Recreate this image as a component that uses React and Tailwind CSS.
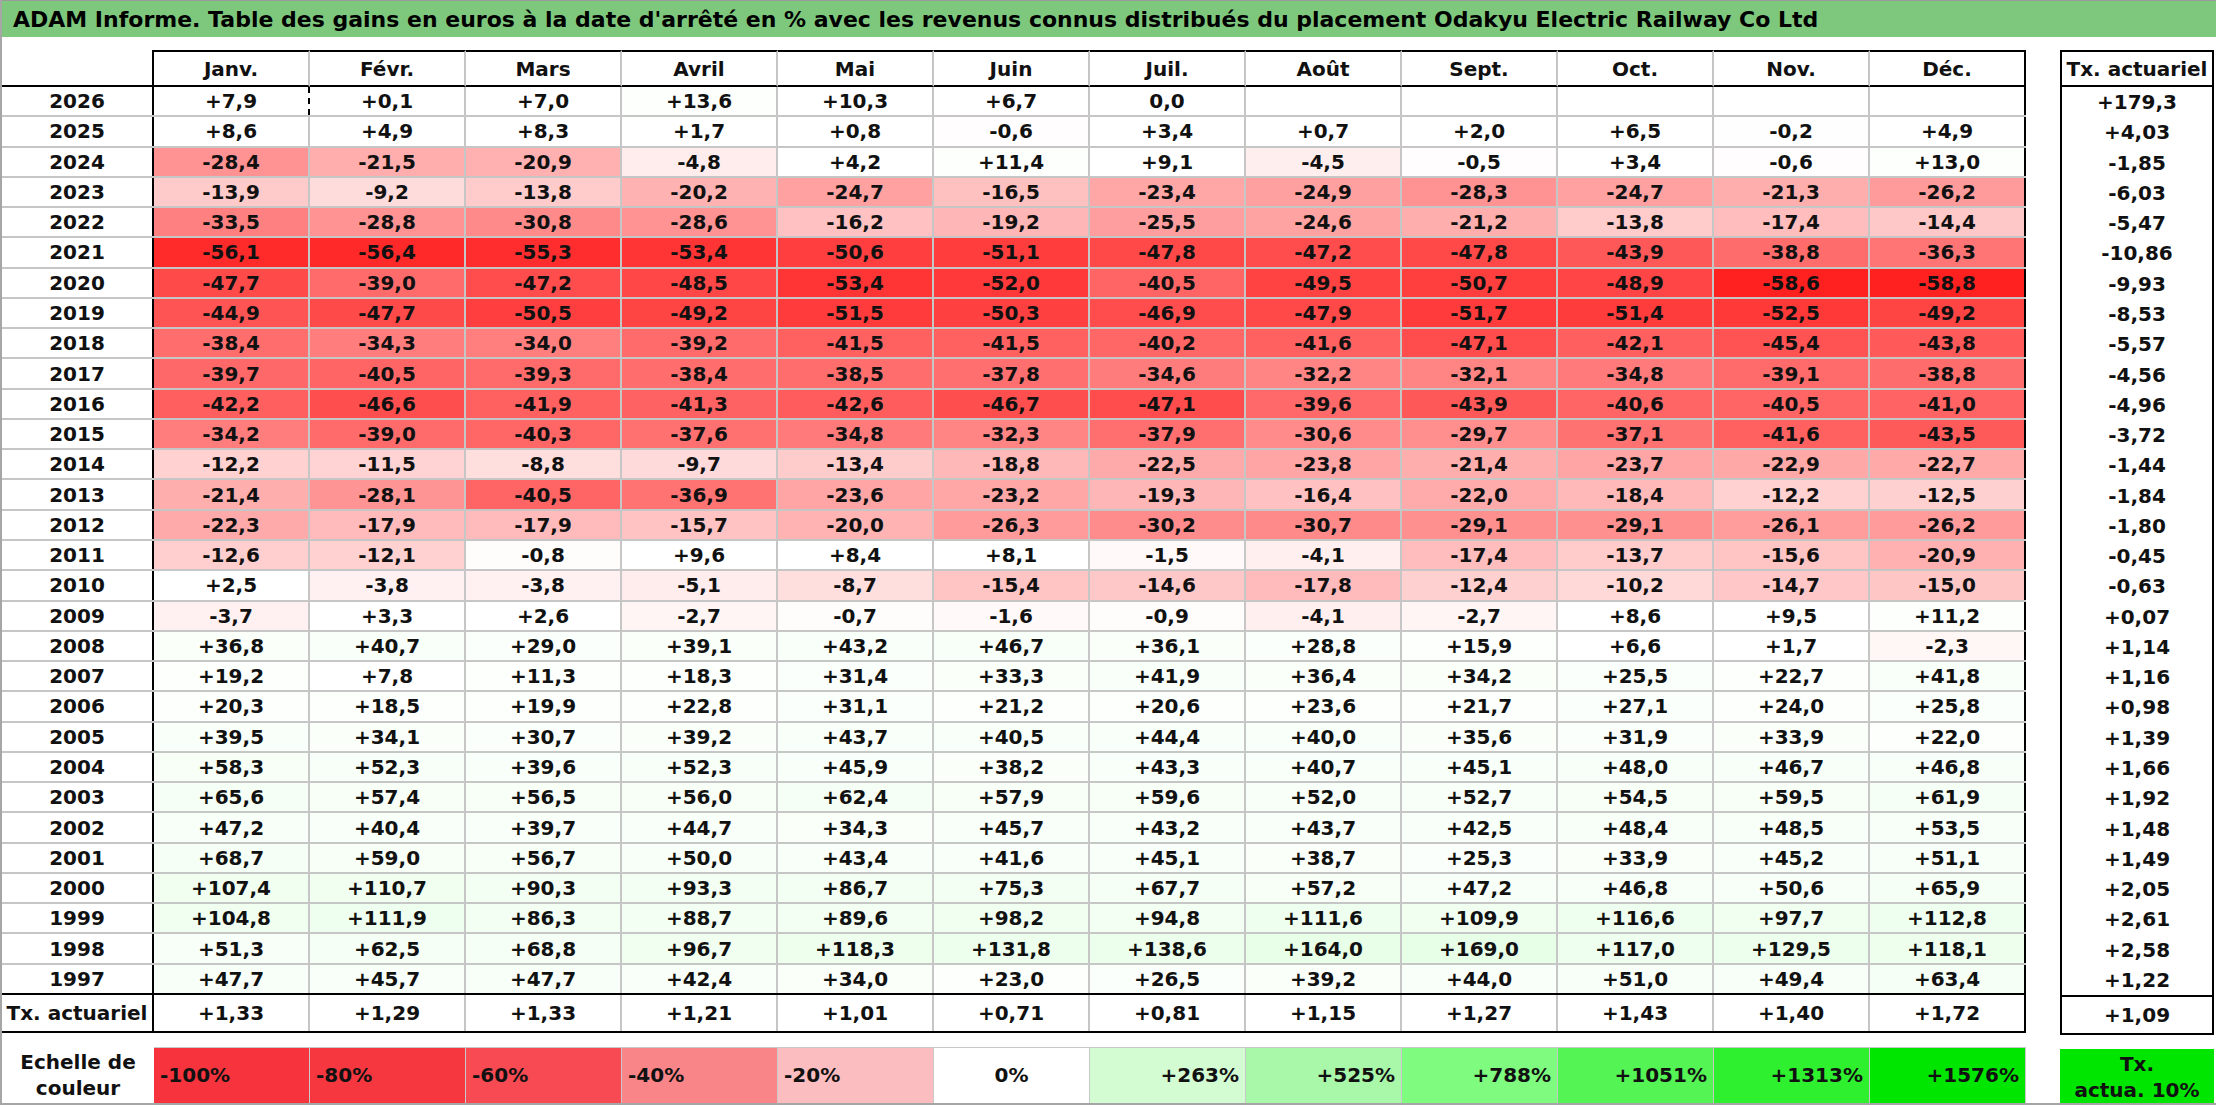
const months = ['Janv.', 'Févr.', 'Mars', 'Avril', 'Mai', 'Juin', 'Juil.', 'Août', 'Sept.', 'Oct.', 'Nov.', 'Déc.'];

const rows = [
  ['2026', '+7,9 +0,1 +7,0 +13,6 +10,3 +6,7 0,0 _ _ _ _ _', '+179,3'],
  ['2025', '+8,6 +4,9 +8,3 +1,7 +0,8 -0,6 +3,4 +0,7 +2,0 +6,5 -0,2 +4,9', '+4,03'],
  ['2024', '-28,4 -21,5 -20,9 -4,8 +4,2 +11,4 +9,1 -4,5 -0,5 +3,4 -0,6 +13,0', '-1,85'],
  ['2023', '-13,9 -9,2 -13,8 -20,2 -24,7 -16,5 -23,4 -24,9 -28,3 -24,7 -21,3 -26,2', '-6,03'],
  ['2022', '-33,5 -28,8 -30,8 -28,6 -16,2 -19,2 -25,5 -24,6 -21,2 -13,8 -17,4 -14,4', '-5,47'],
  ['2021', '-56,1 -56,4 -55,3 -53,4 -50,6 -51,1 -47,8 -47,2 -47,8 -43,9 -38,8 -36,3', '-10,86'],
  ['2020', '-47,7 -39,0 -47,2 -48,5 -53,4 -52,0 -40,5 -49,5 -50,7 -48,9 -58,6 -58,8', '-9,93'],
  ['2019', '-44,9 -47,7 -50,5 -49,2 -51,5 -50,3 -46,9 -47,9 -51,7 -51,4 -52,5 -49,2', '-8,53'],
  ['2018', '-38,4 -34,3 -34,0 -39,2 -41,5 -41,5 -40,2 -41,6 -47,1 -42,1 -45,4 -43,8', '-5,57'],
  ['2017', '-39,7 -40,5 -39,3 -38,4 -38,5 -37,8 -34,6 -32,2 -32,1 -34,8 -39,1 -38,8', '-4,56'],
  ['2016', '-42,2 -46,6 -41,9 -41,3 -42,6 -46,7 -47,1 -39,6 -43,9 -40,6 -40,5 -41,0', '-4,96'],
  ['2015', '-34,2 -39,0 -40,3 -37,6 -34,8 -32,3 -37,9 -30,6 -29,7 -37,1 -41,6 -43,5', '-3,72'],
  ['2014', '-12,2 -11,5 -8,8 -9,7 -13,4 -18,8 -22,5 -23,8 -21,4 -23,7 -22,9 -22,7', '-1,44'],
  ['2013', '-21,4 -28,1 -40,5 -36,9 -23,6 -23,2 -19,3 -16,4 -22,0 -18,4 -12,2 -12,5', '-1,84'],
  ['2012', '-22,3 -17,9 -17,9 -15,7 -20,0 -26,3 -30,2 -30,7 -29,1 -29,1 -26,1 -26,2', '-1,80'],
  ['2011', '-12,6 -12,1 -0,8 +9,6 +8,4 +8,1 -1,5 -4,1 -17,4 -13,7 -15,6 -20,9', '-0,45'],
  ['2010', '+2,5 -3,8 -3,8 -5,1 -8,7 -15,4 -14,6 -17,8 -12,4 -10,2 -14,7 -15,0', '-0,63'],
  ['2009', '-3,7 +3,3 +2,6 -2,7 -0,7 -1,6 -0,9 -4,1 -2,7 +8,6 +9,5 +11,2', '+0,07'],
  ['2008', '+36,8 +40,7 +29,0 +39,1 +43,2 +46,7 +36,1 +28,8 +15,9 +6,6 +1,7 -2,3', '+1,14'],
  ['2007', '+19,2 +7,8 +11,3 +18,3 +31,4 +33,3 +41,9 +36,4 +34,2 +25,5 +22,7 +41,8', '+1,16'],
  ['2006', '+20,3 +18,5 +19,9 +22,8 +31,1 +21,2 +20,6 +23,6 +21,7 +27,1 +24,0 +25,8', '+0,98'],
  ['2005', '+39,5 +34,1 +30,7 +39,2 +43,7 +40,5 +44,4 +40,0 +35,6 +31,9 +33,9 +22,0', '+1,39'],
  ['2004', '+58,3 +52,3 +39,6 +52,3 +45,9 +38,2 +43,3 +40,7 +45,1 +48,0 +46,7 +46,8', '+1,66'],
  ['2003', '+65,6 +57,4 +56,5 +56,0 +62,4 +57,9 +59,6 +52,0 +52,7 +54,5 +59,5 +61,9', '+1,92'],
  ['2002', '+47,2 +40,4 +39,7 +44,7 +34,3 +45,7 +43,2 +43,7 +42,5 +48,4 +48,5 +53,5', '+1,48'],
  ['2001', '+68,7 +59,0 +56,7 +50,0 +43,4 +41,6 +45,1 +38,7 +25,3 +33,9 +45,2 +51,1', '+1,49'],
  ['2000', '+107,4 +110,7 +90,3 +93,3 +86,7 +75,3 +67,7 +57,2 +47,2 +46,8 +50,6 +65,9', '+2,05'],
  ['1999', '+104,8 +111,9 +86,3 +88,7 +89,6 +98,2 +94,8 +111,6 +109,9 +116,6 +97,7 +112,8', '+2,61'],
  ['1998', '+51,3 +62,5 +68,8 +96,7 +118,3 +131,8 +138,6 +164,0 +169,0 +117,0 +129,5 +118,1', '+2,58'],
  ['1997', '+47,7 +45,7 +47,7 +42,4 +34,0 +23,0 +26,5 +39,2 +44,0 +51,0 +49,4 +63,4', '+1,22'],
];

const txRow = ['+1,33', '+1,29', '+1,33', '+1,21', '+1,01', '+0,71', '+0,81', '+1,15', '+1,27', '+1,43', '+1,40', '+1,72'];

const legend = [
  { label: '-100%', bg: 'bg-[#f7343d]', align: 'justify-start pl-[6px]' },
  { label: '-80%', bg: 'bg-[#f73740]', align: 'justify-start pl-[6px]' },
  { label: '-60%', bg: 'bg-[#f74a52]', align: 'justify-start pl-[6px]' },
  { label: '-40%', bg: 'bg-[#fa8589]', align: 'justify-start pl-[6px]' },
  { label: '-20%', bg: 'bg-[#fbbdbf]', align: 'justify-start pl-[6px]' },
  { label: '0%', bg: 'bg-white', align: 'justify-center' },
  { label: '+263%', bg: 'bg-[#d3fcd3]', align: 'justify-end pr-[6px]' },
  { label: '+525%', bg: 'bg-[#a9f8a9]', align: 'justify-end pr-[6px]' },
  { label: '+788%', bg: 'bg-[#7ffb7f]', align: 'justify-end pr-[6px]' },
  { label: '+1051%', bg: 'bg-[#55f455]', align: 'justify-end pr-[6px]' },
  { label: '+1313%', bg: 'bg-[#2ef02e]', align: 'justify-end pr-[6px]' },
  { label: '+1576%', bg: 'bg-[#00e600]', align: 'justify-end pr-[6px]' },
];

// heat colour of a cell, from its value
function cellBg(s) {
  if (!s) return '#ffffff';
  const v = parseFloat(s.replace(',', '.'));
  if (v < 0) {
    const g = Math.max(24, Math.round(255 - 3.8 * -v));
    return `rgb(255,${g},${g})`;
  }
  const d = Math.round(0.14 * v);
  return `rgb(${255 - d},255,${255 - d})`;
}

export default function App() {
  return (
    <div className="w-[2216px] h-[1105px] bg-white border-l-2 border-b-2 border-[#a6a6a6] overflow-hidden font-['DejaVu_Sans',sans-serif] font-bold text-[20px] text-[#111]">
      <div className="h-[37px] bg-[#7ec87e] border-t border-[#9a9a9a] flex items-center pl-[11px] text-[22px] text-black whitespace-nowrap">
        ADAM Informe. Table des gains en euros à la date d'arrêté en % avec les revenus connus distribués du placement Odakyu Electric Railway Co Ltd
      </div>

      <div className="flex mt-[13px]">
        {/* main table */}
        <div className="w-[2024px] flex flex-col">
          <div className="flex h-[37px]">
            <div className="w-[152px] border-r-2 border-b-2 border-black" />
            {months.map((m, i) => (
              <div
                key={m}
                className={`w-[156px] flex items-center justify-center border-t-2 border-b-2 border-t-black border-b-black border-r-2 ${i === 11 ? 'border-r-black' : 'border-r-[#c6c6c6]'}`}
              >
                {m}
              </div>
            ))}
          </div>

          {rows.map(([year, vals], r) => {
            const cells = vals.split(' ').map((x) => (x === '_' ? '' : x));
            return (
              <div key={year} className={`flex h-[30.27px] border-b-2 ${r === rows.length - 1 ? 'border-black' : 'border-[#c6c6c6]'}`}>
                <div className="w-[152px] flex items-center justify-center border-r-2 border-black">{year}</div>
                {cells.map((c, i) => (
                  <div
                    key={i}
                    className={`w-[156px] flex items-center justify-center border-r-2 ${
                      i === 11 ? 'border-black' : r === 0 && i === 0 ? 'border-dashed border-black' : 'border-[#c6c6c6]'
                    }`}
                    style={{ backgroundColor: cellBg(c) }}
                  >
                    {c}
                  </div>
                ))}
              </div>
            );
          })}

          <div className="flex h-[38px] border-b-2 border-black">
            <div className="w-[152px] flex items-center justify-center border-r-2 border-black">Tx. actuariel</div>
            {txRow.map((c, i) => (
              <div key={i} className={`w-[156px] flex items-center justify-center border-r-2 ${i === 11 ? 'border-black' : 'border-[#c6c6c6]'}`}>
                {c}
              </div>
            ))}
          </div>

          <div className="flex h-[56px] mt-[14px]">
            <div className="w-[152px] flex flex-col items-center justify-center leading-[26px]">
              <span>Echelle de</span>
              <span>couleur</span>
            </div>
            {legend.map((l) => (
              <div key={l.label} className={`w-[156px] flex items-center border-t border-r border-[#c8c8c8] ${l.bg} ${l.align}`}>
                {l.label}
              </div>
            ))}
          </div>
        </div>

        {/* yearly rate column */}
        <div className="w-[154px] ml-[34px] flex flex-col">
          <div className="h-[37px] flex items-center justify-center border-2 border-black whitespace-nowrap">Tx. actuariel</div>
          <div className="flex flex-col border-x-2 border-b-2 border-black">
            {rows.map(([year, , tx]) => (
              <div key={year} className="h-[30.27px] flex items-center justify-center">
                {tx}
              </div>
            ))}
          </div>
          <div className="h-[38px] flex items-center justify-center border-x-2 border-b-2 border-black">+1,09</div>
          <div className="h-[56px] mt-[14px] flex flex-col items-center justify-center bg-[#00e600] leading-[26px]">
            <span>Tx.</span>
            <span>actua. 10%</span>
          </div>
        </div>
      </div>
    </div>
  );
}
